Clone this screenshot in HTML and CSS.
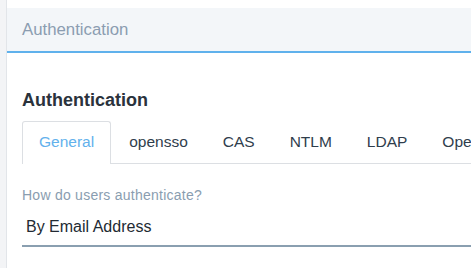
FILE: index.html
```html
<!DOCTYPE html>
<html lang="en">
<head>
  <meta charset="UTF-8">
  <title>Authentication</title>
  <link rel="stylesheet" href="styles.css">
</head>
<body>
  <div class="rail"></div>
  <div class="main">
    <div class="panel-head">Authentication</div>
    <div class="panel-body">
      <h2 class="title">Authentication</h2>
      <ul class="tabs">
        <li class="active">General</li>
        <li>opensso</li>
        <li>CAS</li>
        <li>NTLM</li>
        <li>LDAP</li>
        <li>OpenID</li>
        <li>SAML</li>
      </ul>
      <div class="field">
        <label class="field-label">How do users authenticate?</label>
        <div class="field-input">By Email Address</div>
      </div>
    </div>
  </div>
</body>
</html>
```

FILE: styles.css
```css
*, *:before, *:after{
  padding: 0;
  margin: 0;
  box-sizing: border-box;
}
body{
  display: flex;
  height: 100vh;
  overflow: hidden;
  background: #ffffff;
  font-family: "Liberation Sans", Arial, sans-serif;
}
.rail{
  width: 7px;
  flex: none;
  background: #f3f4f6;
  border-right: 1px solid #e2e5e9;
}
.main{
  flex: 1;
  min-width: 0;
  padding-top: 8px;
}
.panel-head{
  height: 45px;
  padding: 0 15px;
  background: #f3f6f9;
  border-bottom: 2px solid #5fb1ec;
  color: #8b9db1;
  font-size: 16.8px;
  line-height: 43px;
}
.panel-body{
  padding: 36px 0 0 15px;
}
.title{
  font-size: 18px;
  line-height: 22px;
  font-weight: bold;
  color: #2a323c;
}
.tabs{
  list-style: none;
  display: flex;
  white-space: nowrap;
  margin-top: 10px;
  border-bottom: 1px solid #dcdfe3;
  width: 600px;
}
.tabs li{
  font-size: 15.5px;
  line-height: 18px;
  color: #2f3d4c;
  padding: 11px 16px 12px;
  border: 1px solid transparent;
  border-bottom: none;
  border-radius: 3px 3px 0 0;
  margin-bottom: -1px;
  height: 43px;
}
.tabs li + li{
  margin-left: 1px;
}
.tabs li.active{
  color: #62b1ec;
  background: #ffffff;
  border-color: #dcdfe3;
}
.field{
  margin-top: 23px;
}
.field-label{
  display: block;
  font-size: 14px;
  letter-spacing: 0.25px;
  line-height: 16px;
  color: #8a9db0;
  margin-bottom: 14px;
}
.field-input{
  font-size: 16px;
  line-height: 20px;
  color: #222a33;
  padding: 0 4px 8px;
  border-bottom: 2px solid #8a9fb0;
  width: 600px;
}
```
